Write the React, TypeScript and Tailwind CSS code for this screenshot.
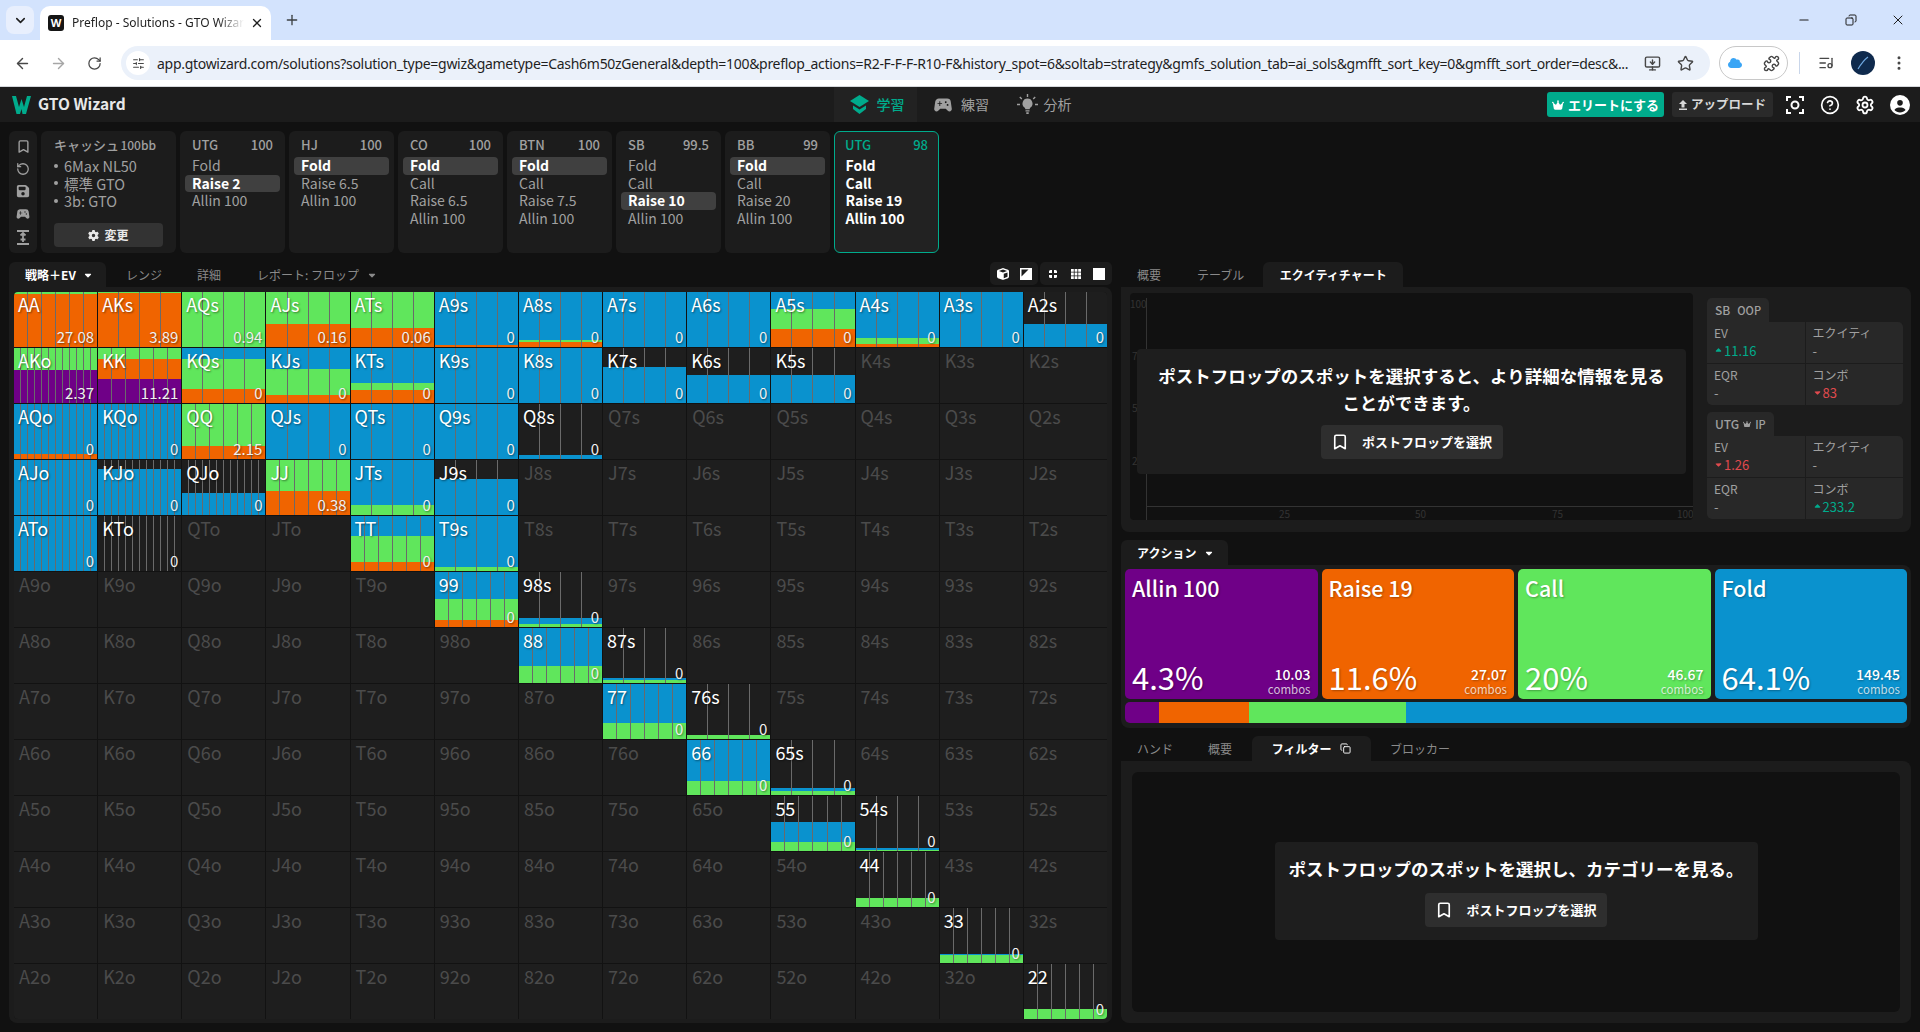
import { ArrowLeft, ArrowRight, RotateCw, Star, Plus, X, Minus, ChevronDown, Puzzle, MonitorDown, EllipsisVertical, ListMusic, SlidersHorizontal, Bookmark, RotateCcw, CircleHelp, Settings, Copy } from 'lucide-react';
import { FaCrown, FaGear, FaFloppyDisk, FaCircleUser, FaCube, FaCloud, FaCaretDown, FaCaretUp } from 'react-icons/fa6';
import { MdSportsEsports } from 'react-icons/md';

const ranks = ['A', 'K', 'Q', 'J', 'T', '9', '8', '7', '6', '5', '4', '3', '2'];

// allin, raise, call, fold (percent of cell height), value
const hands: Record<string, [number, number, number, number, string?]> = {
  AA: [0, 96, 4, 0, '27.08'], AKs: [0, 98, 2, 0, '3.89'], AQs: [0, 0, 100, 0, '0.94'], AJs: [0, 41, 59, 0, '0.16'], ATs: [0, 34, 66, 0, '0.06'],
  A9s: [0, 3, 0, 97], A8s: [0, 9, 2, 89], A7s: [0, 0, 0, 100], A6s: [0, 0, 0, 100], A5s: [0, 31, 38, 31], A4s: [0, 5, 11, 84], A3s: [0, 0, 0, 100], A2s: [0, 0, 0, 41],
  AKo: [60, 0, 40, 0, '2.37'], KK: [43, 37, 20, 0, '11.21'], KQs: [0, 25, 55, 20], KJs: [0, 14, 47, 39], KTs: [0, 22, 14, 64], K9s: [0, 0, 0, 100], K8s: [0, 0, 0, 100], K7s: [0, 0, 0, 65], K6s: [0, 0, 0, 50], K5s: [0, 0, 0, 50],
  AQo: [0, 8, 0, 92], KQo: [0, 0, 0, 100], QQ: [0, 22, 78, 0, '2.15'], QJs: [0, 0, 0, 100], QTs: [0, 0, 0, 100], Q9s: [0, 0, 0, 100], Q8s: [0, 0, 0, 7],
  AJo: [0, 0, 0, 100], KJo: [0, 0, 0, 83], QJo: [0, 0, 0, 40], JJ: [0, 42, 58, 0, '0.38'], JTs: [0, 0, 18, 82], J9s: [0, 0, 0, 65],
  ATo: [0, 0, 0, 100], KTo: [0, 0, 0, 0], TT: [0, 16, 47, 37], T9s: [0, 0, 7, 93],
  '99': [0, 11, 39, 50], '98s': [0, 0, 5, 10], '88': [0, 0, 30, 70], '87s': [0, 0, 4, 4], '77': [0, 0, 29, 71], '76s': [0, 0, 7, 0],
  '66': [0, 0, 25, 75], '65s': [0, 0, 7, 4], '55': [0, 0, 15, 36], '54s': [0, 0, 1, 3], '44': [0, 0, 16, 0], '33': [0, 0, 13, 3], '22': [0, 0, 18, 0],
};

const seats = [
  { name: 'UTG', stack: '100', rows: ['Fold', 'Raise 2', 'Allin 100'], on: 1 },
  { name: 'HJ', stack: '100', rows: ['Fold', 'Raise 6.5', 'Allin 100'], on: 0 },
  { name: 'CO', stack: '100', rows: ['Fold', 'Call', 'Raise 6.5', 'Allin 100'], on: 0 },
  { name: 'BTN', stack: '100', rows: ['Fold', 'Call', 'Raise 7.5', 'Allin 100'], on: 0 },
  { name: 'SB', stack: '99.5', rows: ['Fold', 'Call', 'Raise 10', 'Allin 100'], on: 2 },
  { name: 'BB', stack: '99', rows: ['Fold', 'Call', 'Raise 20', 'Allin 100'], on: 0 },
];

const actions = [
  { name: 'Allin 100', pct: '4.3%', combos: '10.03', bg: 'bg-[#6f0087]' },
  { name: 'Raise 19', pct: '11.6%', combos: '27.07', bg: 'bg-[#f06400]' },
  { name: 'Call', pct: '20%', combos: '46.67', bg: 'bg-[#60e65c]' },
  { name: 'Fold', pct: '64.1%', combos: '149.45', bg: 'bg-[#0a92ce]' },
];

function HandCell({ label }: { label: string }) {
  const hand = hands[label];
  const combos = label.length === 2 ? 6 : label.endsWith('s') ? 4 : 12;
  if (!hand) {
    return (
      <div className="bg-[#1e1e1e] pl-[5px] text-[18px] leading-[24px] text-[#4b4b4b]">{label}</div>
    );
  }
  const [allin, raise, call, fold, value] = hand;
  return (
    <div className="relative flex flex-col justify-between overflow-hidden bg-[#1e1e1e] text-white [text-shadow:1px_1px_2px_rgba(0,0,0,0.45)]">
      <div className="absolute inset-0 flex flex-col justify-end">
        <div className="bg-[#0a92ce]" style={{ height: `${fold}%` }} />
        <div className="bg-[#60e65c]" style={{ height: `${call}%` }} />
        <div className="bg-[#f06400]" style={{ height: `${raise}%` }} />
        <div className="bg-[#6f0087]" style={{ height: `${allin}%` }} />
      </div>
      <div className="absolute inset-0 flex">
        {Array.from({ length: combos }).map((_, i) => (
          <div key={i} className="flex-1 border-r border-[#6a6a6a] last:border-r-0" />
        ))}
      </div>
      <div className="relative pl-[4px] text-[18px] leading-[24px]">{label}</div>
      <div className="relative pr-[3px] text-right text-[15px] leading-[20px] text-[#f0f0f0]">{value ?? '0'}</div>
    </div>
  );
}

function StatBox({ rows, title }: { title: React.ReactNode; rows: [string, React.ReactNode][] }) {
  return (
    <div>
      <div className="flex h-[24px] w-fit items-center gap-[4px] rounded-t-[5px] bg-[#282828] pl-[8px] pr-[8px] text-[12px] font-medium text-[#a0a0a0]">{title}</div>
      <div className="grid h-[83px] grid-cols-2 gap-px overflow-hidden rounded-b-[5px] rounded-tr-[5px] bg-[#1c1c1c]">
        {rows.map(([k, v]) => (
          <div key={k} className="flex flex-col gap-[1px] bg-[#282828] px-[7px] pt-[2px] text-[12px] leading-[17px] text-[#a0a0a0]">
            <span>{k}</span>
            <span className="text-[13px]">{v}</span>
          </div>
        ))}
      </div>
    </div>
  );
}

const Up = ({ v }: { v: string }) => (
  <span className="flex items-center gap-[1px] text-[#00ab8c]"><FaCaretUp size={9} />{v}</span>
);
const Down = ({ v }: { v: string }) => (
  <span className="flex items-center gap-[1px] text-[#e04a4e]"><FaCaretDown size={9} />{v}</span>
);

function PostflopButton() {
  return (
    <button className="flex h-[34px] w-[182px] items-center justify-center gap-[13px] rounded-[4px] bg-[#2e2e2e] text-[13px] font-bold text-white">
      <Bookmark size={18} strokeWidth={2.2} />
      ポストフロップを選択
    </button>
  );
}

function ChromeBar() {
  return (
    <>
      <div className="flex h-[40px] bg-[#d3e3fd] pl-[6px] font-['Noto_Sans',sans-serif]">
        <div className="mt-[6px] flex h-[28px] w-[28px] items-center justify-center rounded-[8px] bg-[#e8effd]"><ChevronDown size={15} strokeWidth={2.5} className="text-[#1f1f1f]" /></div>
        <div className="ml-[6px] mt-[6px] flex h-[34px] w-[231px] items-center rounded-t-[10px] bg-white pl-[8px] pr-[7px]">
          <div className="flex h-[16px] w-[16px] items-center justify-center rounded-[3px] bg-[#151515] text-[11px] font-bold text-white">W</div>
          <span className="ml-[8px] w-[172px] overflow-hidden whitespace-nowrap text-[12px] text-[#1f1f1f] [mask-image:linear-gradient(to_right,black_85%,transparent)]">Preflop - Solutions - GTO Wizard</span>
          <X size={14} strokeWidth={2.2} className="ml-auto text-[#1f1f1f]" />
        </div>
        <Plus size={16} strokeWidth={2} className="ml-[13px] mt-[12px] text-[#3c4043]" />
        <div className="ml-auto flex items-start text-[#1f1f1f]">
          <Minus size={14} className="mr-[34px] mt-[13px]" />
          <Copy size={12} className="mr-[33px] mt-[14px] scale-x-[-1]" />
          <X size={16} strokeWidth={1.5} className="mr-[14px] mt-[12px]" />
        </div>
      </div>
      <div className="flex h-[47px] items-center border-b border-[#d5d8dc] bg-white font-['Noto_Sans',sans-serif] text-[#474747]">
        <ArrowLeft size={17} strokeWidth={2} className="ml-[14px]" />
        <ArrowRight size={17} strokeWidth={2} className="ml-[19px] text-[#a6a6a6]" />
        <RotateCw size={15} strokeWidth={2} className="ml-[20px]" />
        <div className="ml-[19px] flex h-[34px] w-[1589px] items-center rounded-full bg-[#ebf1fa] pl-[5px]">
          <div className="flex h-[24px] w-[24px] items-center justify-center rounded-full bg-white"><SlidersHorizontal size={13} /></div>
          <span className="ml-[7px] whitespace-nowrap text-[14px] tracking-[-0.29px] text-[#1f1f1f]">app.gtowizard.com/solutions?solution_type=gwiz&amp;gametype=Cash6m50zGeneral&amp;depth=100&amp;preflop_actions=R2-F-F-F-R10-F&amp;history_spot=6&amp;soltab=strategy&amp;gmfs_solution_tab=ai_sols&amp;gmfft_sort_key=0&amp;gmfft_sort_order=desc&amp;...</span>
          <MonitorDown size={17} className="ml-auto text-[#474747]" />
          <Star size={17} className="ml-[16px] mr-[16px] text-[#474747]" />
        </div>
        <div className="ml-[9px] flex h-[34px] w-[69px] items-center justify-between rounded-full border border-[#c8c8c8] pl-[8px] pr-[7px]">
          <FaCloud size={14} className="text-[#3aa5f5]" />
          <Puzzle size={17} />
        </div>
        <div className="ml-[11px] h-[22px] w-px bg-[#c9d6ea]" />
        <ListMusic size={16} className="ml-[18px]" />
        <svg width="24" height="24" viewBox="0 0 24 24" className="ml-[17px]"><circle cx="12" cy="12" r="12" fill="#0f2a4d" /><path d="M7 18C10 13 13 9 17 6" stroke="#6fa8e0" strokeWidth="1.200" fill="none" /></svg>
        <EllipsisVertical size={18} className="ml-[15px]" />
      </div>
    </>
  );
}

function TopNav() {
  return (
    <div className="flex h-[35px] items-center bg-[#1c1c1c]">
      <div className="flex w-[834px] items-center pl-[12px]">
        <svg width="19" height="18" viewBox="0 0 19 18" fill="#00ab8c"><path d="M0 0h4l3 11 2.500-8 2.500 8L15 0h4l-5 18h-3.500L9.500 13 8 18H4.500z" /></svg>
        <span className="ml-[7px] pb-[2px] text-[15.500px] font-bold text-[#e8e8e8]">GTO Wizard</span>
      </div>
      <div className="flex h-full w-[83px] items-center justify-center gap-[8px] bg-[#222222] pl-[3px] text-[14px] font-medium text-[#00ab8c]">
        <svg width="19" height="20" viewBox="0 0 19 20" fill="#00ab8c"><path d="M9.500 0l9.500 6-9.500 6L0 6z" /><path d="M3 10.500l6.500 4 6.500-4v3.500l-6.500 5-6.500-5z" /></svg>
        学習
      </div>
      <div className="flex h-full w-[83px] items-center justify-center gap-[7px] pl-[4px] text-[14px] text-[#a0a0a0]"><MdSportsEsports size={22} />練習</div>
      <div className="flex h-full w-[88px] items-center justify-center gap-[6px] text-[14px] text-[#a0a0a0]">
        <svg width="21" height="21" viewBox="0 0 21 21" fill="currentColor">
          <path d="M10.500 4.500a5 5 0 0 0-3 9c.6.500.8 1 .8 1.700h4.400c0-.7.2-1.200.8-1.700a5 5 0 0 0-3-9zM8.500 16.200h4v1.300h-4zM9.300 18.300h2.400V20H9.300z" />
          <path d="M10.500 0v3M2.800 3l2 2M18.200 3l-2 2M0 10.500h3M18 10.500h3" stroke="currentColor" strokeWidth="1.400" fill="none" />
        </svg>
        分析
      </div>
      <div className="ml-auto flex items-center pr-[10px]">
        <button className="flex h-[25px] w-[117px] items-center justify-center gap-[4px] rounded-[3px] bg-[#00ab8c] text-[13px] font-bold text-white"><FaCrown size={12} />エリートにする</button>
        <button className="ml-[8px] flex h-[25px] w-[101px] items-center justify-center gap-[4px] rounded-[3px] bg-[#2a2a2a] text-[12.500px] font-bold text-[#d8d8d8]">
          <svg width="8" height="10" viewBox="0 0 8 10" fill="currentColor"><path d="M4 0l4 4H5.500v3.500h-3V4H0zM0 8.500h8V10H0z" /></svg>
          アップロード
        </button>
        <div className="ml-[12px] flex items-center gap-[15px] text-white">
          <svg width="20" height="20" viewBox="0 0 20 20" fill="none" stroke="currentColor" strokeWidth="2"><path d="M2 6V2h4M14 2h4v4M18 14v4h-4M6 18H2v-4" /><circle cx="10" cy="10" r="3.500" /></svg>
          <CircleHelp size={20} strokeWidth={2} />
          <Settings size={20} strokeWidth={2.2} />
          <FaCircleUser size={20} />
        </div>
      </div>
    </div>
  );
}

function Strip() {
  return (
    <div className="flex h-[122px] gap-[4px]">
      <div className="flex w-[28px] flex-col items-center justify-between rounded-[6px] bg-[#1c1c1c] py-[8px] text-[#a0a0a0]">
        <Bookmark size={15} strokeWidth={2.2} />
        <RotateCcw size={14} strokeWidth={2.2} />
        <FaFloppyDisk size={14} />
        <MdSportsEsports size={16} />
        <svg width="14" height="15" viewBox="0 0 14 15" fill="none" stroke="currentColor" strokeWidth="1.800"><path d="M1 1h12M1 14h12M7 3v9M4.500 5.500L7 3l2.500 2.500M4.500 9.500h5" /></svg>
      </div>
      <div className="flex w-[135px] flex-col rounded-[6px] bg-[#1c1c1c] px-[13px] text-[#a0a0a0]">
        <div className="mt-[5px] flex h-[18px] items-center justify-between pr-[7px] text-[13px] font-medium leading-[18px] whitespace-nowrap">
          <span>キャッシュ</span><span className="text-[12px]">100bb</span>
        </div>
        <ul className="mt-[3px] text-[14.500px] leading-[17.500px]">
          {['6Max NL50', '標準 GTO', '3b: GTO'].map((t) => (
            <li key={t} className="flex items-center gap-[6px] whitespace-nowrap"><span className="h-[4px] w-[4px] rounded-full bg-[#a0a0a0]" />{t}</li>
          ))}
        </ul>
        <button className="mt-auto mb-[6px] flex h-[24px] items-center justify-center gap-[5px] rounded-[4px] bg-[#333333] text-[12px] font-bold text-[#e8e8e8]"><FaGear size={11} />変更</button>
      </div>
      {seats.map((s) => (
        <div key={s.name} className="w-[105px] rounded-[6px] bg-[#1c1c1c]">
          <div className="mt-[5px] flex h-[18px] items-center justify-between px-[12px] text-[13px] font-medium text-[#a0a0a0]">
            <span>{s.name}</span><span>{s.stack}</span>
          </div>
          <div className="mt-[3px] flex flex-col px-[5px]">
            {s.rows.map((r, i) => (
              <div key={r} className={`h-[17.700px] rounded-[4px] pl-[7px] text-[14px] leading-[17.700px] ${i === s.on ? 'bg-[#404040] font-bold text-white' : 'text-[#a0a0a0]'}`}>{r}</div>
            ))}
          </div>
        </div>
      ))}
      <div className="w-[105px] rounded-[6px] border-[1.500px] border-[#00ab8c] bg-[#222222]">
        <div className="mt-[4px] flex h-[18px] items-center justify-between px-[10px] text-[13px] font-medium text-[#00ab8c]">
          <span>UTG</span><span>98</span>
        </div>
        <div className="mt-[3px] flex flex-col px-[3.500px]">
          {['Fold', 'Call', 'Raise 19', 'Allin 100'].map((r) => (
            <div key={r} className="h-[17.700px] pl-[7px] text-[14px] font-bold leading-[17.700px] text-white">{r}</div>
          ))}
        </div>
      </div>
    </div>
  );
}

function LeftPane() {
  return (
    <div className="flex w-[1103px] flex-col">
      <div className="flex h-[25px] items-stretch">
        <div className="flex w-[97px] items-center gap-[7px] rounded-t-[6px] bg-[#1c1c1c] pl-[16px] text-[12px] font-bold text-white">戦略＋EV<FaCaretDown size={10} /></div>
        <div className="ml-[20px] flex items-center text-[12px] text-[#8a8a8a]">レンジ</div>
        <div className="ml-[35px] flex items-center text-[12px] text-[#8a8a8a]">詳細</div>
        <div className="ml-[36px] flex items-center gap-[8px] text-[12px] text-[#8a8a8a]">レポート: フロップ<FaCaretDown size={10} /></div>
        <div className="ml-auto flex h-[23px] w-[48px] items-center justify-center gap-[11px] rounded-[5px] bg-[#1c1c1c] text-white">
          <FaCube size={12} />
          <svg width="12" height="12" viewBox="0 0 12 12"><path d="M0 0h12v12H0z" fill="#fff" /><path d="M1.500 1.500h7l-7 7z" fill="#1c1c1c" /></svg>
        </div>
        <div className="ml-[2px] flex h-[23px] w-[72px] items-center justify-center gap-[11px] rounded-[5px] bg-[#1c1c1c] text-white">
          <svg width="12" height="12" viewBox="0 0 12 12" fill="#fff"><path d="M2 5V3.500A1.500 1.500 0 0 1 3.500 2H5v3zM7 2h1.500A1.500 1.500 0 0 1 10 3.500V5H7zM2 7h3v3H3.500A1.500 1.500 0 0 1 2 8.500zM7 7h3v1.500A1.500 1.500 0 0 1 8.500 10H7z" /></svg>
          <svg width="12" height="12" viewBox="0 0 12 12" fill="#fff"><path d="M1 1h2.800v2.800H1zM4.600 1h2.800v2.800H4.600zM8.200 1H11v2.800H8.200zM1 4.600h2.800v2.800H1zM4.600 4.600h2.800v2.800H4.600zM8.200 4.600H11v2.800H8.200zM1 8.200h2.800V11H1zM4.600 8.200h2.800V11H4.600zM8.200 8.200H11V11H8.200z" /></svg>
          <div className="h-[12px] w-[12px] bg-white" />
        </div>
      </div>
      <div className="h-[736px] rounded-b-[8px] rounded-tr-[8px] bg-[#1c1c1c] pl-[5px] pt-[4.500px]">
        <div className="grid h-[727px] w-[1093px] grid-cols-13 grid-rows-13 gap-px overflow-hidden rounded-[4px] bg-[#121212]">
          {ranks.flatMap((r, i) =>
            ranks.map((c, j) => {
              const label = i === j ? r + c : i < j ? r + c + 's' : c + r + 'o';
              return <HandCell key={label} label={label} />;
            })
          )}
        </div>
      </div>
    </div>
  );
}

function Tab({ label, ml }: { label: string; ml: string }) {
  return <div className={`flex items-center whitespace-nowrap text-[12px] text-[#8a8a8a] ${ml}`}>{label}</div>;
}

function RightPane() {
  return (
    <div className="flex w-[790px] flex-col">
      <div className="flex h-[25px]">
        <Tab label="概要" ml="ml-[16px]" />
        <Tab label="テーブル" ml="ml-[36px]" />
        <div className="ml-[19px] flex w-[140px] items-center justify-center rounded-t-[6px] bg-[#1c1c1c] text-[12px] font-bold text-white">エクイティチャート</div>
      </div>
      <div className="flex h-[245px] gap-[14px] rounded-[8px] rounded-tl-none bg-[#1c1c1c] pl-[9px] pr-[8px] pt-[6px]">
        <div className="relative h-[227px] w-[563px] overflow-hidden rounded-[4px] bg-[#111111] text-[10px] leading-[10px] text-[#333333]">
          <div className="absolute left-[16px] top-[5px] bottom-0 w-px bg-[#333333]" />
          <div className="absolute left-[16px] right-0 top-[213px] h-px bg-[#333333]" />
          <span className="absolute left-0 top-[6px]">100</span>
          <span className="absolute left-[2px] top-[58px]">75</span>
          <span className="absolute left-[2px] top-[110px]">50</span>
          <span className="absolute left-[2px] top-[163px]">25</span>
          <span className="absolute left-[149px] top-[216px]">25</span>
          <span className="absolute left-[285px] top-[216px]">50</span>
          <span className="absolute left-[422px] top-[216px]">75</span>
          <span className="absolute left-[547px] top-[216px]">100</span>
          <div className="absolute left-[7px] top-[56px] flex h-[125px] w-[549px] flex-col items-center rounded-[4px] bg-[#1e1e1e] pt-[13px]">
            <p className="w-[520px] text-center text-[17.500px] font-bold leading-[27px] text-white">ポストフロップのスポットを選択すると、より詳細な情報を見ることができます。</p>
            <div className="mt-[9px]"><PostflopButton /></div>
          </div>
        </div>
        <div className="flex w-[196px] flex-col gap-[7px] pt-[5px]">
          <StatBox title={<><span>SB</span><span className="ml-[3px] text-[11px]">OOP</span></>} rows={[['EV', <Up v="11.16" />], ['エクイティ', '-'], ['EQR', '-'], ['コンボ', <Down v="83" />]]} />
          <StatBox title={<><span>UTG</span><FaCrown size={8} /><span className="text-[11px]">IP</span></>} rows={[['EV', <Down v="1.26" />], ['エクイティ', '-'], ['EQR', '-'], ['コンボ', <Up v="233.2" />]]} />
        </div>
      </div>

      <div className="mt-[8px] flex h-[25px] w-[107px] items-center gap-[8px] rounded-t-[6px] bg-[#1c1c1c] pl-[16px] text-[12px] font-bold text-white">アクション<FaCaretDown size={10} /></div>
      <div className="flex h-[163px] flex-col gap-[3px] rounded-[8px] rounded-tl-none bg-[#1c1c1c] px-[4px] pt-[4px]">
        <div className="grid h-[130px] grid-cols-4 gap-[4px]">
          {actions.map((a) => (
            <div key={a.name} className={`flex flex-col justify-between rounded-[5px] px-[7px] pb-[1px] pt-[3px] text-white [text-shadow:1px_1px_2px_rgba(0,0,0,0.3)] ${a.bg}`}>
              <div className="text-[21.500px] font-medium leading-[32px]">{a.name}</div>
              <div className="flex items-end justify-between">
                <div className="text-[31px] leading-[42px]">{a.pct}</div>
                <div className="pb-[2px] text-right">
                  <div className="text-[14px] font-medium leading-[15px]">{a.combos}</div>
                  <div className="text-[11.500px] leading-[14px] text-white/75">combos</div>
                </div>
              </div>
            </div>
          ))}
        </div>
        <div className="flex h-[21px] overflow-hidden rounded-[5px]">
          <div className="w-[4.300%] bg-[#6f0087]" />
          <div className="w-[11.600%] bg-[#f06400]" />
          <div className="w-[20%] bg-[#60e65c]" />
          <div className="flex-1 bg-[#0a92ce]" />
        </div>
      </div>

      <div className="mt-[8px] flex h-[25px]">
        <Tab label="ハンド" ml="ml-[16px]" />
        <Tab label="概要" ml="ml-[35px]" />
        <div className="ml-[20px] flex w-[119px] items-center justify-center gap-[9px] rounded-t-[6px] bg-[#1c1c1c] text-[12px] font-bold text-white">フィルター<Copy size={11} /></div>
        <Tab label="ブロッカー" ml="ml-[19px]" />
      </div>
      <div className="flex h-[262px] rounded-[8px] rounded-tl-none bg-[#1c1c1c] px-[11px] py-[11px]">
        <div className="flex flex-1 items-center justify-center rounded-[6px] bg-[#111111] pb-[2px]">
          <div className="flex h-[98px] w-[483px] flex-col items-center rounded-[4px] bg-[#1e1e1e] pt-[13px]">
            <p className="text-[17.500px] font-bold leading-[27px] text-white">ポストフロップのスポットを選択し、カテゴリーを見る。</p>
            <div className="mt-[11px]"><PostflopButton /></div>
          </div>
        </div>
      </div>
    </div>
  );
}

export default function App() {
  return (
    <div className="flex h-[1032px] w-[1920px] flex-col overflow-hidden bg-[#111111] font-['Noto_Sans_CJK_JP','Noto_Sans',sans-serif]">
      <ChromeBar />
      <TopNav />
      <div className="flex flex-col gap-[9px] px-[9px] pt-[9px]">
        <Strip />
        <div className="flex gap-[9px]">
          <LeftPane />
          <RightPane />
        </div>
      </div>
    </div>
  );
}
